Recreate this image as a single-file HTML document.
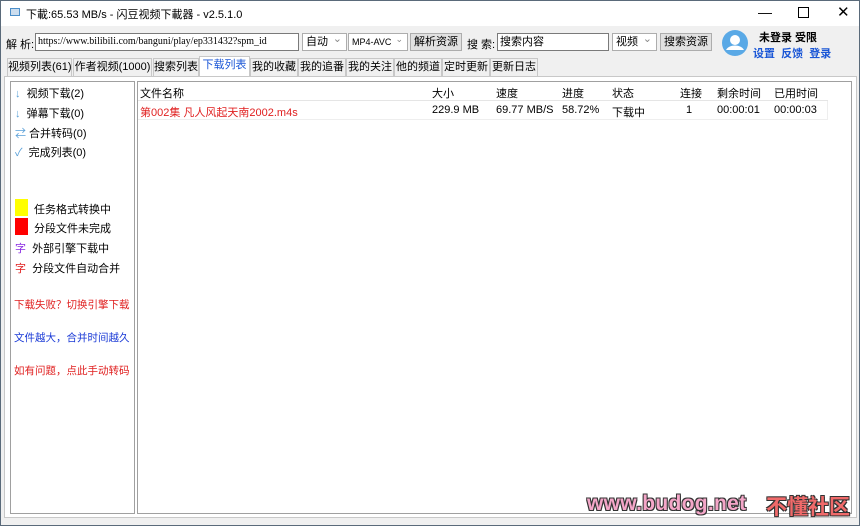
<!DOCTYPE html>
<html><head><meta charset="utf-8">
<style>
*{box-sizing:border-box;margin:0;padding:0}
body{width:860px;height:526px;background:#f0f0f0;font-family:"Liberation Sans","Noto Sans CJK SC",sans-serif;font-size:11px;color:#000;position:relative;overflow:hidden;border:1px solid #5a6a7a}
.a{position:absolute;white-space:nowrap}
.tb{background:#fff;height:25px;top:0;left:0;right:0}
.inp{background:#fff;border:1px solid #7a7a7a;height:18px;font-size:11px;line-height:16px;padding-left:2px;overflow:hidden}
.btn{background:#e1e1e1;border:1px solid #adadad;height:18px;line-height:16px;padding:0 3px;font-size:11px}
.sel{background:#fff;border:1px solid #adadad;height:18px;line-height:16px;padding-left:3px;font-size:11px}
.sel:after{content:"⌄";position:absolute;right:4px;top:-3px;color:#888}
.tab{top:57px;height:19px;border:1px solid #c8c8c8;border-bottom:none;background:#f0f0f0;line-height:17px;text-align:center;font-size:11px;overflow:hidden}
.tab.on{background:#fff;color:#1a56d6;top:55px;height:21px}
.li{left:14px;font-size:11px}
.hd{top:84px;font-size:11px}
.rw{top:103px;font-size:11px}
</style></head><body>
<div class="a tb"></div>
<div class="a" style="left:9px;top:7px;width:10px;height:8px;border:1px solid #4b8ec9;background:#cde"></div>
<div class="a" style="left:25px;top:5px;font-size:11px">下載:65.53 MB/s - 闪豆视频下載器 - v2.5.1.0</div>
<div class="a" style="left:757px;top:3px;font-size:14px">—</div>
<div class="a" style="left:797px;top:6px;width:11px;height:11px;border:1px solid #000"></div>
<div class="a" style="left:836px;top:2px;font-size:15px">✕</div>

<div class="a" style="left:5px;top:35px">解 析:</div>
<div class="a inp" style="left:34px;top:32px;width:264px;font-family:'Liberation Serif','Liberation Mono',serif;font-size:10px">https://www.bilibili.com/banguni/play/ep331432?spm_id</div>
<div class="a sel" style="left:301px;top:32px;width:45px">自动</div>
<div class="a sel" style="left:347px;top:32px;width:60px;font-size:9px">MP4-AVC</div>
<div class="a btn" style="left:409px;top:32px">解析资源</div>
<div class="a" style="left:466px;top:35px">搜 索:</div>
<div class="a inp" style="left:496px;top:32px;width:112px">搜索内容</div>
<div class="a sel" style="left:611px;top:32px;width:45px">视频</div>
<div class="a btn" style="left:659px;top:32px">搜索资源</div>
<svg class="a" style="left:720px;top:28px" width="28" height="28"><circle cx="14" cy="14" r="13" fill="#5aa9e6"/><circle cx="14" cy="11" r="5" fill="#fff"/><path d="M5 21c3-6 15-6 18 0" fill="#fff"/></svg>
<div class="a" style="left:758px;top:28px;font-weight:bold">未登录 受限</div>
<div class="a" style="left:752px;top:44px;font-weight:bold;color:#1a56d6">设置&nbsp; 反馈&nbsp; 登录</div>

<div class="a tab" style="left:6px;width:65px">视频列表(61)</div>
<div class="a tab" style="left:72px;width:79px">作者视频(1000)</div>
<div class="a tab" style="left:152px;width:46px">搜索列表</div>
<div class="a tab on" style="left:198px;width:51px">下载列表</div>
<div class="a tab" style="left:249px;width:48px">我的收藏</div>
<div class="a tab" style="left:297px;width:48px">我的追番</div>
<div class="a tab" style="left:345px;width:48px">我的关注</div>
<div class="a tab" style="left:393px;width:48px">他的频道</div>
<div class="a tab" style="left:441px;width:48px">定时更新</div>
<div class="a tab" style="left:489px;width:48px">更新日志</div>

<div class="a" style="left:3px;top:75px;width:853px;height:442px;background:#fff;border:1px solid #c8c8c8"></div>
<div class="a" style="left:9px;top:80px;width:125px;height:433px;background:#fff;border:1px solid #a0a0a0"></div>
<div class="a" style="left:136px;top:80px;width:715px;height:433px;background:#fff;border:1px solid #a0a0a0"></div>

<div class="a li" style="top:84px"><span style="color:#5aa0d8">↓</span>&nbsp; 视频下载(2)</div>
<div class="a li" style="top:104px"><span style="color:#5aa0d8">↓</span>&nbsp; 弹幕下载(0)</div>
<div class="a li" style="top:124px"><span style="color:#5aa0d8">⇄</span> 合并转码(0)</div>
<div class="a li" style="top:143px"><span style="color:#5aa0d8">✓</span>&nbsp; 完成列表(0)</div>
<div class="a" style="left:14px;top:198px;width:13px;height:17px;background:#ffff00"></div>
<div class="a" style="left:14px;top:217px;width:13px;height:17px;background:#ff0000"></div>
<div class="a li" style="left:33px;top:200px">任务格式转换中</div>
<div class="a li" style="left:33px;top:219px">分段文件未完成</div>
<div class="a li" style="top:239px"><span style="color:#8a2be2">字</span>&nbsp; 外部引擎下载中</div>
<div class="a li" style="top:259px"><span style="color:#e02020">字</span>&nbsp; 分段文件自动合并</div>
<div class="a li" style="left:13px;top:296px;color:#e02020;font-size:10.5px">下载失败？切换引擎下载</div>
<div class="a li" style="left:13px;top:329px;color:#1a3ad6;font-size:10.5px">文件越大，合并时间越久</div>
<div class="a li" style="left:13px;top:362px;color:#e02020;font-size:10.5px">如有问题，点此手动转码</div>

<div class="a" style="left:137px;top:81px;width:690px;height:19px;border-bottom:1px solid #e5e5e5"></div>
<div class="a hd" style="left:139px">文件名称</div>
<div class="a hd" style="left:431px">大小</div>
<div class="a hd" style="left:495px">速度</div>
<div class="a hd" style="left:561px">进度</div>
<div class="a hd" style="left:611px">状态</div>
<div class="a hd" style="left:679px">连接</div>
<div class="a hd" style="left:716px">剩余时间</div>
<div class="a hd" style="left:773px">已用时间</div>
<div class="a" style="left:137px;top:100px;width:690px;height:19px;border-bottom:1px solid #eee;border-right:1px solid #eee"></div>
<div class="a rw" style="left:139px;color:#e02020">第002集 凡人风起天南2002.m4s</div>
<div class="a rw" style="left:431px">229.9 MB</div>
<div class="a rw" style="left:495px">69.77 MB/S</div>
<div class="a rw" style="left:561px">58.72%</div>
<div class="a rw" style="left:611px">下载中</div>
<div class="a rw" style="left:685px">1</div>
<div class="a rw" style="left:716px">00:00:01</div>
<div class="a rw" style="left:773px">00:00:03</div>

<div class="a" style="left:586px;top:491px;font-size:21px;font-weight:bold;letter-spacing:0.3px;color:#f4a6c8;text-shadow:1px 1px 0 #333,-1px -1px 0 #333,1px -1px 0 #333,-1px 1px 0 #333">www.budog.net</div>
<div class="a" style="left:765px;top:490px;font-size:21px;font-weight:bold;color:#f06a6a;text-shadow:1px 1px 0 #333,-1px -1px 0 #333,1px -1px 0 #333,-1px 1px 0 #333">不懂社区</div>
</body></html>
